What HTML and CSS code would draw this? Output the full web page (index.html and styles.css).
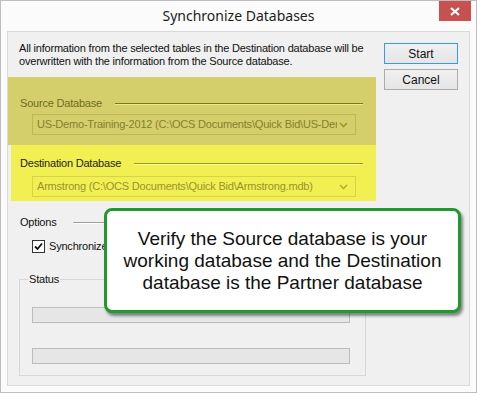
FILE: index.html
```html
<!DOCTYPE html>
<html>
<head>
  <link rel="stylesheet" href="styles.css">
</head>
<body>
  <div class="window">
    <div class="titlebar">
      <span></span>
      <div class="titlebar__title">Synchronize Databases</div>
      <button class="titlebar__close" type="button">
        <svg width="10" height="9" viewBox="0 0 10 9"><path d="M1 1 L9 8 M9 1 L1 8" stroke="#fff" stroke-width="2.2"/></svg>
      </button>
    </div>

    <div class="client">
      <div class="main">
        <p class="intro">All information from the selected tables in the Destination database will be<br>overwritten with the information from the Source database.</p>

        <section class="group group--source">
          <div class="group__head">
            <span class="group__label">Source Database</span>
            <span class="group__line"></span>
          </div>
          <div class="combo">
            <span class="combo__text">US-Demo-Training-2012 (C:\OCS Documents\Quick Bid\US-Demo-Training-2012.mdb)</span>
            <svg class="combo__arrow" width="9" height="6" viewBox="0 0 9 6"><path d="M1 1 L4.5 4.5 L8 1" fill="none" stroke="currentColor" stroke-width="1.6"/></svg>
          </div>
        </section>

        <section class="group group--dest">
          <div class="group__head">
            <span class="group__label">Destination Database</span>
            <span class="group__line"></span>
          </div>
          <div class="combo">
            <span class="combo__text">Armstrong (C:\OCS Documents\Quick Bid\Armstrong.mdb)</span>
            <svg class="combo__arrow" width="9" height="6" viewBox="0 0 9 6"><path d="M1 1 L4.5 4.5 L8 1" fill="none" stroke="currentColor" stroke-width="1.6"/></svg>
          </div>
        </section>

        <div class="options">
          <div class="options__head">
            <span>Options</span>
            <span class="options__line"></span>
          </div>
          <label class="check">
            <span class="check__box">
              <svg width="11" height="11" viewBox="0 0 11 11"><path d="M2 5.5 L4.5 8 L9 2.5" fill="none" stroke="#111" stroke-width="1.8"/></svg>
            </span>
            <span class="check__text">Synchronize</span>
          </label>
        </div>

        <fieldset class="status">
          <legend>Status</legend>
          <div class="progress"></div>
          <div class="progress"></div>
        </fieldset>
      </div>

      <div class="actions">
        <button class="btn btn--default" type="button">Start</button>
        <button class="btn" type="button">Cancel</button>
      </div>
    </div>

    <div class="callout">
      Verify the Source database is your working database and the Destination database is the Partner database
    </div>
  </div>
</body>
</html>
```

FILE: styles.css
```css
body {
  margin: 0;
  background: #fff;
  font-family: "Liberation Sans", Arial, sans-serif;
  font-size: 11px;
  letter-spacing: -0.2px;
  color: #111;
}

.window {
  position: relative;
  box-sizing: border-box;
  width: 477px;
  height: 393px;
  border: 1px solid #bdbdbd;
  background: #fbfbfb;
}

.titlebar {
  display: grid;
  grid-template-columns: 1fr auto 1fr;
  align-items: start;
  height: 30px;
}

.titlebar__title {
  padding-top: 5px;
  font-family: "Noto Sans", "Open Sans", sans-serif;
  font-size: 14px;
  line-height: 19px;
  letter-spacing: 0;
  color: #1c1c1c;
}

.titlebar__close {
  justify-self: end;
  display: flex;
  align-items: center;
  justify-content: center;
  width: 32px;
  height: 20px;
  margin-right: 5px;
  padding: 0;
  border: 0;
  background: #c75050;
}

.client {
  display: flex;
  box-sizing: border-box;
  height: 355px;
  margin: 0 6px;
  border: 1px solid #d9d9d9;
  background: #f0f0f0;
}

.main {
  width: 368px;
}

.intro {
  margin: 0;
  padding: 10px 0 0 11px;
  line-height: 13px;
  white-space: nowrap;
}

.group {
  box-sizing: border-box;
  line-height: 13px;
}

.group--source {
  height: 68px;
  margin-top: 9px;
  padding: 20px 13px 0 12px;
  background: #d4cf6b;
  color: #706c26;
}

.group--dest {
  height: 56px;
  margin-left: 3px;
  padding: 12px 13px 0 9px;
  background: #f2ef52;
  color: #1e1e1e;
}

.group__head {
  display: flex;
  align-items: center;
}

.group__line {
  flex: 1;
  height: 1px;
  margin-left: 13px;
  background: #7e7900;
  box-shadow: 0 1px 0 #ece89a;
}

.group--dest .group__line {
  background: #9c9814;
  box-shadow: 0 1px 0 #fbf9a4;
}

.combo {
  display: flex;
  align-items: center;
  box-sizing: border-box;
  width: 324px;
  height: 21px;
  margin: 4px 0 0 12px;
  padding: 0 7px 0 4px;
  border: 1px solid #bcb75c;
  color: #85802c;
}

.group--dest .combo {
  margin: 6px 0 0 12px;
  border-color: #d6d34a;
  color: #97942f;
}

.combo__text {
  flex: 1;
  overflow: hidden;
  white-space: nowrap;
}

.combo__arrow {
  margin-left: 2px;
  color: #9c972e;
}

.group--dest .combo__arrow {
  color: #b6b226;
}

.options {
  padding: 15px 13px 0 12px;
  line-height: 13px;
}

.options__head {
  display: flex;
  align-items: center;
}

.options__line {
  flex: 1;
  height: 1px;
  margin-left: 16px;
  background: #a0a0a0;
  box-shadow: 0 1px 0 #fff;
}

.check {
  display: flex;
  align-items: center;
  gap: 4px;
  margin: 11px 0 0 12px;
  height: 13px;
}

.check__box {
  display: flex;
  align-items: center;
  justify-content: center;
  box-sizing: border-box;
  width: 13px;
  height: 13px;
  border: 1px solid #333;
  background: #fff;
}

.status {
  box-sizing: border-box;
  width: 347px;
  min-width: 0;
  margin: 20px 0 0 11px;
  padding: 0 0 11px 0;
  border: 1px solid #d7d7d7;
  line-height: 13px;
}

.status legend {
  margin-left: 8px;
  padding: 0 1px;
}

.progress {
  box-sizing: border-box;
  width: 318px;
  height: 16px;
  margin: 21px 0 0 12px;
  border: 1px solid #bcbcbc;
  background: #e6e6e6;
}

.progress + .progress {
  margin-top: 25px;
}

.actions {
  display: flex;
  flex-direction: column;
  gap: 5px;
  padding: 11px 0 0 8px;
}

.btn {
  width: 74px;
  height: 21px;
  padding: 0;
  border: 1px solid #acacac;
  background: linear-gradient(#f0f0f0, #e5e5e5);
  font: inherit;
  font-size: 12px;
  letter-spacing: 0;
  color: #111;
}

.btn--default {
  border-color: #3399ff;
}

.callout {
  position: absolute;
  top: 207px;
  left: 103px;
  box-sizing: border-box;
  width: 357px;
  height: 105px;
  padding: 17px 10px 0;
  border: 3px solid #1f9a2c;
  border-radius: 8px;
  background: #fff;
  box-shadow: 2px 3px 3px rgba(0, 0, 0, 0.45);
  font-size: 19px;
  line-height: 22px;
  letter-spacing: 0;
  text-align: center;
  color: #111;
}
```
